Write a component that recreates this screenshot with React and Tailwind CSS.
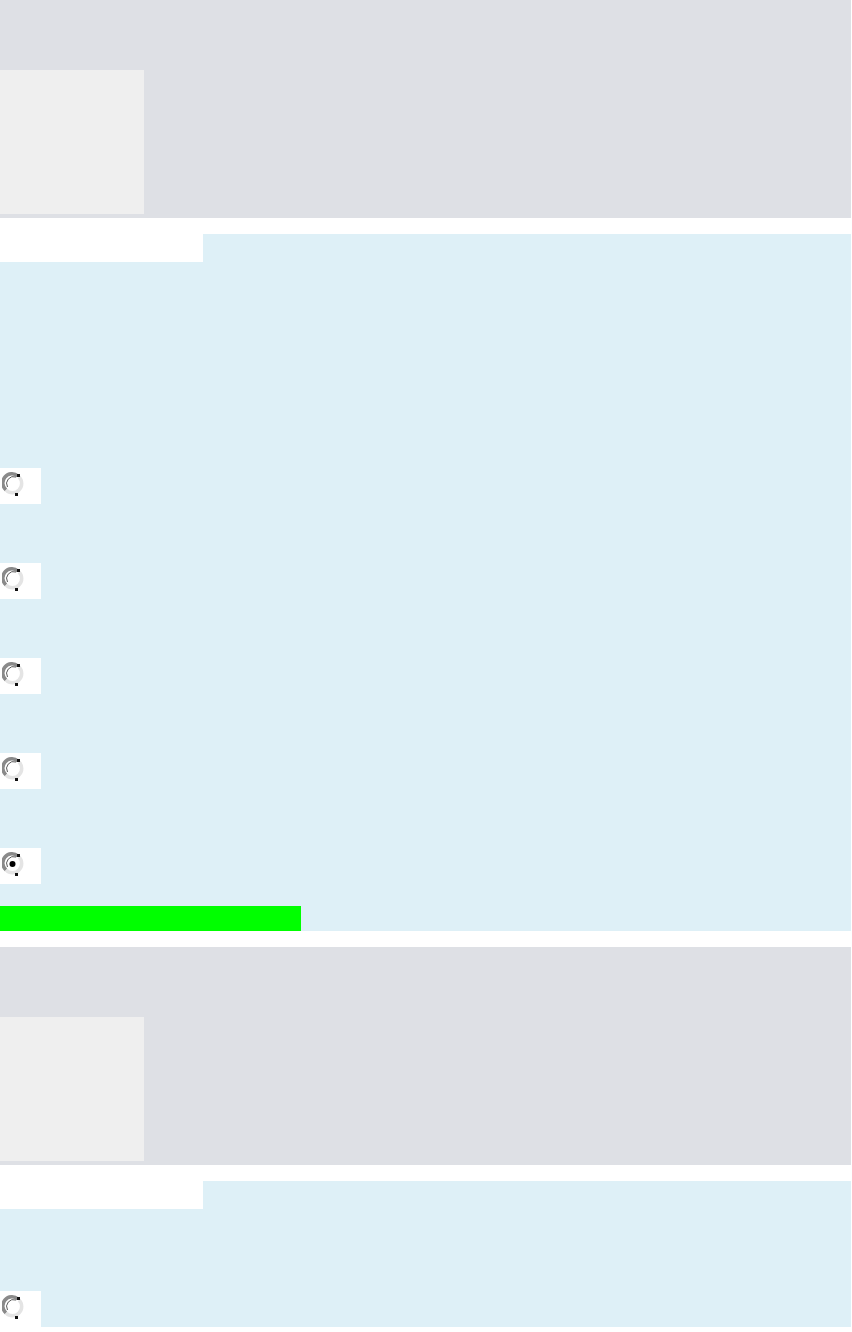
import React from 'react';

const Radio = ({ checked }) => (
    <div className="w-[41px] h-9 bg-white pt-1 pl-0.5">
        <svg width="22" height="24" viewBox="0 0 22 24">
            {/* outer dark arc, top-left */}
            <path d="M16 4 A9 9 0 0 0 4 18" fill="none" stroke="#8a8a8a" strokeWidth="3.5" />
            {/* light arc, bottom-right */}
            <path d="M4 18 A9 9 0 0 0 17 5" fill="none" stroke="#e4e4e4" strokeWidth="3.5" />
            <path d="M14 5 A7 7 0 0 0 5.5 15" fill="none" stroke="#5a5a5a" strokeWidth="1" />
            <rect x="15" y="2" width="3" height="3" fill="#111" />
            <rect x="13" y="21" width="3" height="3" fill="#111" />
            {checked && <circle cx="10.5" cy="12" r="3" fill="#000" />}
        </svg>
    </div>
);

const Question = ({ options, blank, showBar }) => (
    <div>
        {/* Header */}
        <div className="bg-[#dee0e5] pt-[70px] pb-1">
            <div className="w-36 h-36 bg-[#efefef]" />
        </div>

        {/* Body */}
        <div className="mt-4 bg-[#def0f7]">
            <div className="flex h-7">
                <div className="w-[203px] bg-white" />
                <div className="flex-1" />
            </div>
            <div style={{ height: blank }} />
            <div className="flex flex-col gap-[59px]">
                {options.map((o, i) => (
                    <Radio key={i} checked={o} />
                ))}
            </div>
            {showBar && (
                <div className="pt-[22px]">
                    <div className="w-[301px] h-[25px] bg-[#00ff00]" />
                </div>
            )}
        </div>
    </div>
);

const App = () => {
    return (
        <div className="w-[851px] bg-white">
            <Question options={[false, false, false, false, true]} blank={206} showBar />
            <div className="mt-4">
                <Question options={[false]} blank={82} />
            </div>
        </div>
    );
};

export default App;
